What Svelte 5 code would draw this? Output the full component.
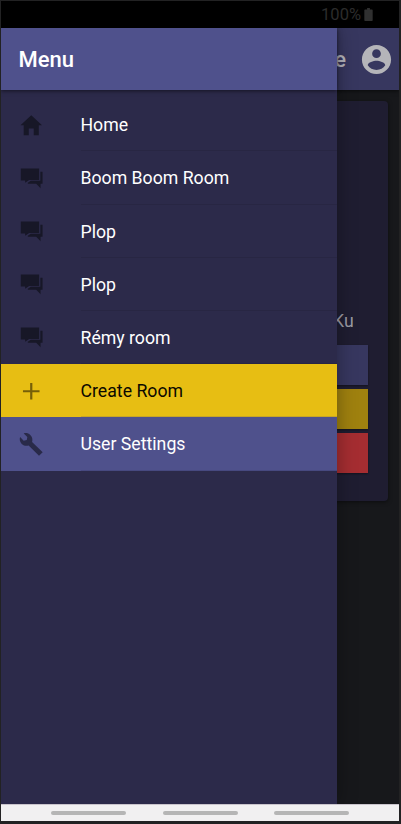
<script>
  const rooms = ['Boom Boom Room', 'Plop', 'Plop', 'Rémy room'];
  const icons = {
    home: 'M208 448V320h96v128h97.600V256H464L256 64 48 256h62.400v192z',
    chat: 'M54 66H408V288H216L138 345V300H54z M432 130H474V360H436V448L352 360H190V344L246 306H432z',
    add: 'M416 277.333H277.333V416h-42.666V277.333H96v-42.666h138.667V96h42.666v138.667H416z',
    build: 'M477 410L272 212C287 164 276 112 237 76C202 43 154 34 111 46L180 116L170 174L110 186L41 118C24 163 35 215 72 250C110 286 160 296 205 280L406 479Z',
  };
  const items = [
    { label: 'Home', icon: 'home', kind: '' },
    ...rooms.map((label) => ({ label, icon: 'chat', kind: '' })),
    { label: 'Create Room', icon: 'add', kind: 'create' },
    { label: 'User Settings', icon: 'build', kind: 'settings' },
  ];
</script>

<div class="device">
  <div class="status">
    <span>100%</span>
    <svg width="9" height="13" viewBox="0 0 9 14"><path d="M3 0h3v1.500h2.200c.5 0 .8.3.8.8v10.900c0 .5-.3.8-.8.8H.8c-.5 0-.8-.3-.8-.8V2.300c0-.5.3-.8.8-.8H3z" fill="#303030" /></svg>
  </div>

  <div class="app">
    <div class="page">
      <header class="topbar">
        <span class="title">Home</span>
        <svg width="35" height="35" viewBox="0 0 24 24"><path fill="#b5b5b9" d="M12 2C6.480 2 2 6.480 2 12s4.480 10 10 10 10-4.480 10-10S17.520 2 12 2zm0 3c1.660 0 3 1.340 3 3s-1.340 3-3 3-3-1.340-3-3 1.340-3 3-3zm0 14.200c-2.500 0-4.710-1.280-6-3.220.030-1.990 4-3.080 6-3.080 1.990 0 5.970 1.090 6 3.080-1.290 1.940-3.500 3.220-6 3.220z" /></svg>
      </header>
      <section class="card">
        <span class="name">Ku</span>
        <div class="btn blue"></div>
        <div class="btn gold"></div>
        <div class="btn red"></div>
      </section>
    </div>

    <aside class="drawer">
      <div class="heading">Menu</div>
      <nav>
        {#each items as item}
          <div class="item {item.kind}">
            <svg class="icon" viewBox="0 0 512 512"><path d={icons[item.icon]} /></svg>
            <span class="label">{item.label}</span>
          </div>
        {/each}
      </nav>
    </aside>
  </div>

  <div class="navbar"><i></i><i></i><i></i></div>
</div>

<style>
  :global(body) { background: #222223; }
  .device {
    box-sizing: border-box;
    width: 401px;
    height: 824px;
    padding: 1px 2px 3px 1px;
    background: #222223;
    display: flex;
    flex-direction: column;
    font-family: Roboto, sans-serif;
    overflow: hidden;
  }
  .status {
    height: 27px;
    flex: none;
    background: #000;
    color: #2c2c2c;
    display: flex;
    align-items: center;
    justify-content: flex-end;
    gap: 3px;
    padding-right: 26px;
    font-size: 16.500px;
  }
  .app { position: relative; flex: 1; overflow: hidden; background: #17181b; }
  .topbar {
    height: 62px;
    box-sizing: border-box;
    background: #37375f;
    display: flex;
    align-items: center;
    justify-content: flex-end;
    gap: 13px;
    padding-right: 5px;
    box-shadow: 0 1px 4px rgba(0, 0, 0, 0.6);
  }
  .title { color: #b5b5bd; font-size: 22px; font-weight: 500; }
  .card {
    box-sizing: border-box;
    height: 400px;
    margin: 11px 11px 0 12px;
    padding: 209px 20px 0;
    border-radius: 4px;
    background: #1f1d31;
    box-shadow: 0 1px 4px rgba(0, 0, 0, 0.5);
    display: flex;
    flex-direction: column;
  }
  .name {
    align-self: flex-end;
    width: 20px;
    overflow: hidden;
    margin-right: 15px;
    height: 35px;
    line-height: 22px;
    font-size: 17.700px;
    color: #9c9ba4;
  }
  .btn { height: 40px; margin-bottom: 4px; flex: none; box-shadow: 0 1px 2px rgba(0, 0, 0, 0.4); }
  .blue { background: #37375f; }
  .gold { background: #9f810f; }
  .red { background: #a52d31; }
  .drawer {
    position: absolute;
    inset: 0 auto 0 0;
    width: 336px;
    background: #2c2a4a;
    box-shadow: 0 0 18px rgba(0, 0, 0, 0.35);
  }
  .heading {
    height: 62px;
    box-sizing: border-box;
    padding-left: 17.500px;
    line-height: 63px;
    font-size: 22px;
    font-weight: 500;
    color: #fff;
    background: #4f518c;
    box-shadow: 0 1px 4px rgba(0, 0, 0, 0.55);
  }
  nav { padding-top: 8.300px; }
  .item {
    height: 53.200px;
    display: flex;
    align-items: center;
    color: #fff;
    font-size: 17.700px;
  }
  .icon { width: 26.500px; height: 26.500px; margin: 0 36px 0 17px; fill: #171727; flex: none; }
  .label {
    flex: 1;
    height: 100%;
    box-sizing: border-box;
    line-height: 55px;
    border-bottom: 1px solid #282643;
  }
  .create { background: #e7be13; color: #0b0900; }
  .create .icon { fill: #765f09; }
  .create .label { border-color: #c9a624; }
  .settings { background: #4f518c; }
  .settings .icon { fill: #292a49; }
  .settings .label { border-color: #474980; }
  .navbar {
    height: 17px;
    flex: none;
    box-sizing: border-box;
    background: #f1f0f1;
    border-top: 1px solid #c9c4cc;
    display: flex;
    align-items: center;
    gap: 36.700px;
    padding-left: 50px;
  }
  .navbar i { width: 75px; height: 4px; border-radius: 2px; background: #b5b5b5; }
</style>
